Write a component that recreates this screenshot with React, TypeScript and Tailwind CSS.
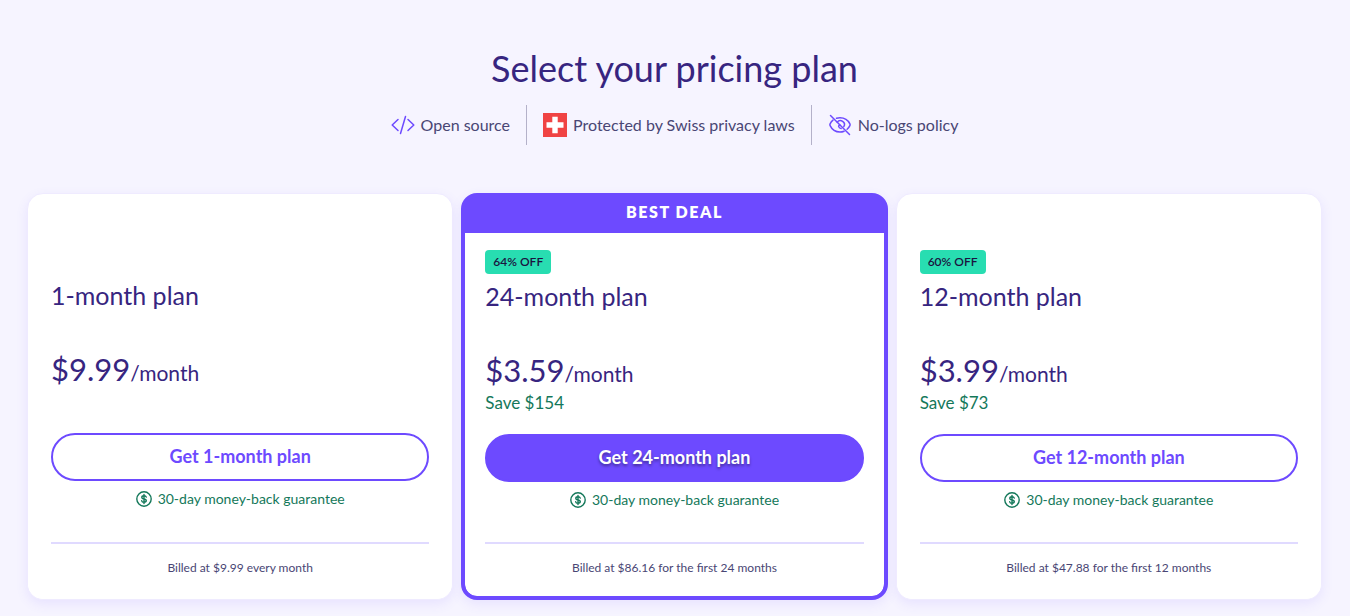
import clsx from "clsx";

interface Plan {
  id: string;
  name: string;
  price: string;
  billing: string;
  discount?: string;
  saving?: string;
  bestDeal?: boolean;
}

const PLANS: Plan[] = [
  {
    id: "1-month",
    name: "1-month plan",
    price: "$9.99",
    billing: "Billed at $9.99 every month",
  },
  {
    id: "24-month",
    name: "24-month plan",
    price: "$3.59",
    billing: "Billed at $86.16 for the first 24 months",
    discount: "64% OFF",
    saving: "Save $154",
    bestDeal: true,
  },
  {
    id: "12-month",
    name: "12-month plan",
    price: "$3.99",
    billing: "Billed at $47.88 for the first 12 months",
    discount: "60% OFF",
    saving: "Save $73",
  },
];

function CodeBrackets() {
  return (
    <svg
      viewBox="0 0 24 24"
      className="size-6 text-[#6d4aff]"
      fill="none"
      stroke="currentColor"
      strokeWidth="1.5"
      strokeLinecap="round"
      strokeLinejoin="round"
      aria-hidden="true"
    >
      <path d="M7 6.500 1.200 12 7 17.500M17 6.500l5.800 5.500L17 17.500M14.500 3.500l-5 17" />
    </svg>
  );
}

function SwissFlag() {
  return (
    <svg viewBox="0 0 24 24" className="size-6" aria-hidden="true">
      <path fill="#f04343" d="M0 0h24v24H0z" />
      <path fill="#fff" d="M9.300 3.700h5.400v5.600h5.800v5.400h-5.800v5.600H9.300v-5.600H3.500V9.300h5.800z" />
    </svg>
  );
}

function EyeSlash() {
  return (
    <svg
      viewBox="0 0 24 24"
      className="size-6 text-[#6d4aff]"
      fill="none"
      stroke="currentColor"
      strokeWidth="1.5"
      strokeLinecap="round"
      aria-hidden="true"
    >
      <path d="M2.500 2.500 21.500 21.500" />
      <path d="M8.500 5.200A12 12 0 0 1 12 4.700c4.500 0 8 2.200 9.900 6.100.3.600.3 1.200 0 1.800a11 11 0 0 1-2.800 3.600" />
      <path d="M5 7.100a11 11 0 0 0-2.900 3.700c-.3.600-.3 1.200 0 1.800C4 16.500 7.500 19 12 19c1.500 0 2.900-.3 4.100-.8" />
      <path d="M9.200 9.200a4 4 0 0 1 6.600 4.500M11.900 11.900a1.500 1.500 0 0 0-1.300 1.500c.3 1.100 1.200 2 2.500 2.200" />
    </svg>
  );
}

function MoneyBack() {
  return (
    <svg
      viewBox="0 0 16 16"
      className="size-4"
      fill="none"
      stroke="currentColor"
      strokeWidth="1.4"
      strokeLinecap="round"
      aria-hidden="true"
    >
      <circle cx="8" cy="8" r="7.200" />
      <path d="M10.300 6.100C10 5.200 9.100 4.800 8 4.800c-1.300 0-2.200.6-2.200 1.600C5.800 8.700 10.300 7.300 10.300 9.600c0 1-1 1.600-2.300 1.600-1.200 0-2.100-.5-2.300-1.400M8 3.500v9" />
    </svg>
  );
}

function PlanCard({ plan }: { plan: Plan }) {
  return (
    <article
      className={clsx(
        "flex flex-col overflow-hidden rounded-2xl shadow-[0_4px_12px_rgba(109,74,255,0.1)]",
        plan.bestDeal
          ? "border-4 border-[#6d4aff] bg-[#6d4aff]"
          : "border border-[#efebff] bg-white"
      )}
    >
      {plan.bestDeal ? (
        <p className="h-9 text-center text-base leading-[30px] font-extrabold tracking-widest text-white">
          BEST DEAL
        </p>
      ) : (
        <div className="h-[39px]" />
      )}

      <div
        className={clsx(
          "flex flex-1 flex-col rounded-b-xl bg-white pt-[17px]",
          plan.bestDeal ? "px-5 pb-5" : "px-[23px] pb-[23px]"
        )}
      >
        {plan.discount ? (
          <span className="self-start rounded-sm bg-[#28ddb1] px-2 text-xs leading-6 font-semibold text-[#1b1340]">
            {plan.discount}
          </span>
        ) : (
          <div className="h-[23px]" />
        )}
        <h2 className="mt-1.5 text-[25px] leading-8">{plan.name}</h2>

        <p className="mt-[42px] text-[31px] leading-8">
          {plan.price}
          <span className="text-[21px] leading-none">/month</span>
        </p>
        <p className="mt-[5px] h-6 text-[17px] leading-6 text-[#14785a]">
          {plan.saving}
        </p>

        <button
          type="button"
          className={clsx(
            "mt-[19px] h-12 cursor-pointer rounded-full border-2 border-[#6d4aff] pb-0.5 text-lg leading-6 font-bold",
            plan.bestDeal
              ? "bg-[#6d4aff] text-white text-shadow-[0_2px_3px_rgba(0,0,0,0.4)]"
              : "bg-white text-[#6d4aff]"
          )}
        >
          Get {plan.name}
        </button>

        <p className="mt-2 mb-8 flex items-center justify-center gap-1.5 text-sm text-[#14785a]">
          <MoneyBack />
          30-day money-back guarantee
        </p>

        <p className="mt-auto border-t-2 border-[#e0daff] pt-4 text-center text-xs leading-4 text-[#494674]">
          {plan.billing}
        </p>
      </div>
    </article>
  );
}

export default function App() {
  return (
    <main className="min-h-screen bg-[#f6f4ff] pt-11 pr-7 pb-4 pl-[27px] font-['Lato','Noto_Sans',sans-serif] text-[#372580]">
      <h1 className="text-center text-4xl leading-12">
        Select your pricing plan
      </h1>

      <ul className="mt-[13px] flex flex-wrap justify-center divide-x divide-[#b4b1c9] text-base text-[#494674]">
        <li className="flex h-10 items-center gap-1.5 px-4">
          <CodeBrackets />
          Open source
        </li>
        <li className="flex h-10 items-center gap-1.5 px-4">
          <SwissFlag />
          Protected by Swiss privacy laws
        </li>
        <li className="flex h-10 items-center gap-1.5 px-4">
          <EyeSlash />
          No-logs policy
        </li>
      </ul>

      <section className="mt-12 grid gap-2 md:grid-cols-3">
        {PLANS.map((plan) => (
          <PlanCard key={plan.id} plan={plan} />
        ))}
      </section>
    </main>
  );
}
